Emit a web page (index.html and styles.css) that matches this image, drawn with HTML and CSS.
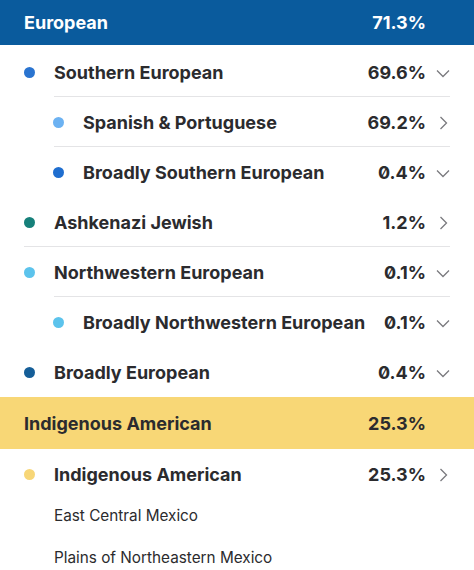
FILE: index.html
```html
<!DOCTYPE html>
<html>
<head>
<meta charset="utf-8">
<link rel="stylesheet" href="styles.css">
</head>
<body>
<div class="page">
  <div class="band band-blue"><span class="band-name">European</span><span class="band-pct">71.3%</span></div>
  <ul class="list">
    <li class="row lvl1 div-inner">
      <span class="dot" style="background:#2a74d0"></span><span class="name">Southern European</span><span class="pct">69.6%</span>
      <svg class="chev" viewBox="0 0 14 14"><path d="M1 4.5 L7 10.5 L13 4.5"/></svg>
    </li>
    <li class="row lvl2 div-inner">
      <span class="dot" style="background:#6cb2f2"></span><span class="name">Spanish &amp; Portuguese</span><span class="pct">69.2%</span>
      <svg class="chev" viewBox="0 0 14 14"><path d="M4.5 1 L10.5 7 L4.5 13"/></svg>
    </li>
    <li class="row lvl2">
      <span class="dot" style="background:#1f6ecf"></span><span class="name">Broadly Southern European</span><span class="pct">0.4%</span>
      <svg class="chev" viewBox="0 0 14 14"><path d="M1 4.5 L7 10.5 L13 4.5"/></svg>
    </li>
    <li class="row lvl1 div-full">
      <span class="dot" style="background:#16807a"></span><span class="name">Ashkenazi Jewish</span><span class="pct">1.2%</span>
      <svg class="chev" viewBox="0 0 14 14"><path d="M4.5 1 L10.5 7 L4.5 13"/></svg>
    </li>
    <li class="row lvl1 div-inner">
      <span class="dot" style="background:#5cc3ec"></span><span class="name">Northwestern European</span><span class="pct">0.1%</span>
      <svg class="chev" viewBox="0 0 14 14"><path d="M1 4.5 L7 10.5 L13 4.5"/></svg>
    </li>
    <li class="row lvl2">
      <span class="dot" style="background:#5cc3ec"></span><span class="name">Broadly Northwestern European</span><span class="pct">0.1%</span>
      <svg class="chev" viewBox="0 0 14 14"><path d="M1 4.5 L7 10.5 L13 4.5"/></svg>
    </li>
    <li class="row lvl1">
      <span class="dot" style="background:#155e98"></span><span class="name">Broadly European</span><span class="pct">0.4%</span>
      <svg class="chev" viewBox="0 0 14 14"><path d="M1 4.5 L7 10.5 L13 4.5"/></svg>
    </li>
  </ul>
  <div class="band band-yellow"><span class="band-name">Indigenous American</span><span class="band-pct">25.3%</span></div>
  <ul class="list">
    <li class="row lvl1">
      <span class="dot" style="background:#f7d677"></span><span class="name">Indigenous American</span><span class="pct">25.3%</span>
      <svg class="chev" viewBox="0 0 14 14"><path d="M4.5 1 L10.5 7 L4.5 13"/></svg>
    </li>
    <li class="sub">East Central Mexico</li>
    <li class="sub">Plains of Northeastern Mexico</li>
  </ul>
</div>
</body>
</html>
```

FILE: styles.css
```css
* { box-sizing: border-box; }
html, body { margin: 0; padding: 0; background: #fff; }
body {
  font-family: "Inter", "Liberation Sans", sans-serif;
  color: #2b2b2e;
  overflow: hidden;
}
.page { width: 474px; }
.band {
  display: flex;
  align-items: center;
  justify-content: space-between;
  padding: 0 48px 0 24px;
  font-weight: 700;
  font-size: 18px;
}
.band-blue {
  height: 45px;
  background: #0a5b9d;
  color: #fff;
  margin-bottom: 2px;
}
.band-yellow {
  height: 52px;
  background: #f8d776;
  color: #2b2b2e;
}
.list { list-style: none; margin: 0; padding: 0; }
.row {
  position: relative;
  display: flex;
  align-items: center;
  height: 50px;
  padding-top: 1px;
  padding-right: 24px;
  font-weight: 700;
  font-size: 18px;
}
.row.lvl1 { padding-left: 24px; }
.row.lvl2 { padding-left: 53px; }
.dot {
  width: 11px;
  height: 11px;
  border-radius: 50%;
  flex: none;
  margin-right: 19px;
}
.name { flex: 1; white-space: nowrap; }
.pct { margin-right: 10px; font-feature-settings: "zero" 1; }
.chev {
  width: 14px;
  height: 14px;
  flex: none;
  fill: none;
  stroke: #7a7a7e;
  stroke-width: 1.3;
}
.div-inner::after, .div-full::after {
  content: "";
  position: absolute;
  right: 24px;
  bottom: 0;
  height: 1px;
  background: #e4e4e6;
}
.div-inner::after { left: 54px; }
.div-full::after { left: 24px; }
.sub {
  padding-left: 54px;
  height: 42px;
  display: flex;
  align-items: center;
  font-size: 15.3px;
  font-weight: 400;
}
.list .row + .sub { margin-top: -5px; }
```
